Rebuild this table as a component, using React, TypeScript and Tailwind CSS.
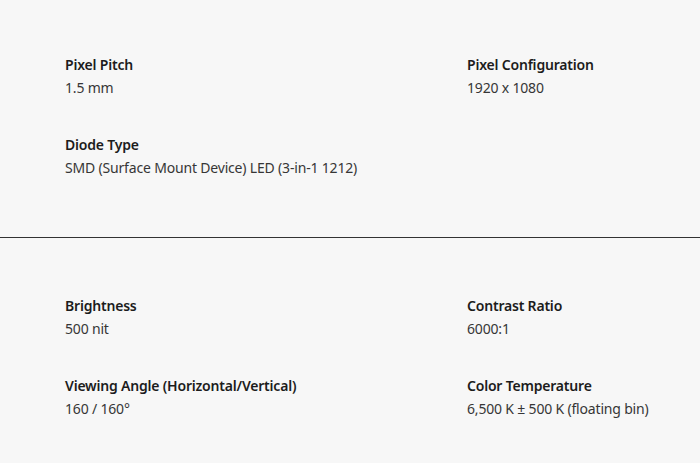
import React from "react";

type Spec = { label: string; value: string };

function Item({ label, value }: Spec) {
  return (
    <div className="flex flex-col">
      <div className="text-[14px] leading-[23px] font-semibold tracking-[-0.2px] text-[#1c1c1c]">{label}</div>
      <div className="text-[14px] leading-[23px] tracking-[-0.18px] text-[#363636]">{value}</div>
    </div>
  );
}

function Section({ items, className }: { items: Spec[]; className: string }) {
  return (
    <div className={`grid grid-cols-[402px_1fr] gap-y-[34px] pl-[65px] ${className}`}>
      {items.map((it) => (
        <Item key={it.label} {...it} />
      ))}
    </div>
  );
}

export default function App() {
  return (
    <div
      className="w-[700px] h-[463px] bg-[#f7f7f7] overflow-hidden"
      style={{ fontFamily: '"Noto Sans", "Open Sans", sans-serif' }}
    >
      <Section
        className="pt-[53px] pb-[58px]"
        items={[
          { label: "Pixel Pitch", value: "1.5 mm" },
          { label: "Pixel Configuration", value: "1920 x 1080" },
          { label: "Diode Type", value: "SMD (Surface Mount Device) LED (3-in-1 1212)" },
        ]}
      />
      <div className="h-px bg-[#333333]" />
      <Section
        className="pt-[56px]"
        items={[
          { label: "Brightness", value: "500 nit" },
          { label: "Contrast Ratio", value: "6000:1" },
          { label: "Viewing Angle (Horizontal/Vertical)", value: "160 / 160°" },
          { label: "Color Temperature", value: "6,500 K ± 500 K (floating bin)" },
        ]}
      />
    </div>
  );
}
